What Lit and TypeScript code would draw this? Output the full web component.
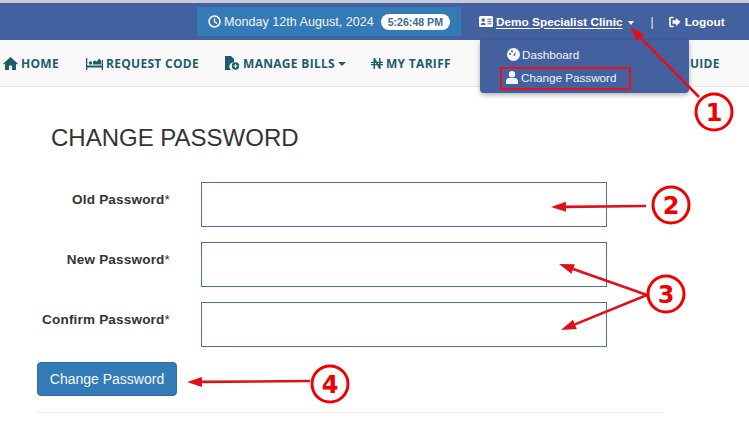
import { LitElement, html, css, svg } from "lit";
import { customElement } from "lit/decorators.js";

const arrow = (x1: number, y1: number, x2: number, y2: number, c = "#e0101a") => {
  const a = Math.atan2(y2 - y1, x2 - x1);
  const l = 15, w = 5;
  const bx = x2 - Math.cos(a) * l, by = y2 - Math.sin(a) * l;
  const nx = -Math.sin(a) * w, ny = Math.cos(a) * w;
  return svg`<line x1=${x1} y1=${y1} x2=${bx} y2=${by} stroke=${c} stroke-width="2.6"></line>
  <polygon fill=${c} points="${x2},${y2} ${bx + nx},${by + ny} ${bx - nx},${by - ny}"></polygon>`;
};
const badge = (cx: number, cy: number, t: string) => svg`
  <circle cx=${cx} cy=${cy} r="18" fill="#fff" stroke="#f00000" stroke-width="3"></circle>
  <text x=${cx} y=${cy + 8.5} text-anchor="middle" class="num">${t}</text>`;

@customElement("app-root")
export class AppRoot extends LitElement {
  static styles = css`
    :host { display: block; position: relative; width: 749px; height: 424px; overflow: hidden; background: #fff;
      font-family: "Liberation Sans", Arial, sans-serif; color: #333; font-size: 14px; }
    .strip { height: 3px; background: #c9ccd6; }
    .top { height: 37px; background: #43619f; display: flex; align-items: center; color: #fff; box-sizing: border-box; padding: 0 0 0 197px; }
    .clock { width: 264px; height: 29px; background: #337ab7; display: flex; align-items: center; box-sizing: border-box; padding-left: 11px; gap: 3px; font-size: 12.6px; color: #f2f6fb; white-space: nowrap; flex: none; }
    .pill { margin-left: 4px; width: 69px; height: 16px; line-height: 16px; background: #fff; color: #3a6c96; border-radius: 8px; text-align: center; font-size: 10.6px; font-weight: bold; }
    .user { margin-left: 18px; display: flex; align-items: center; gap: 3px; font-weight: bold; font-size: 11.8px; white-space: nowrap; }
    .user u { text-underline-offset: 2px; }
    .caret { display: inline-block; border-top: 4px solid #fff; border-left: 3.5px solid transparent; border-right: 3.5px solid transparent; margin-left: 2px; margin-top: 3px; }
    .sep { margin-left: 17px; font-size: 12px; color: #e6ebf5; }
    .logout { margin-left: 15px; display: flex; align-items: center; gap: 4px; font-weight: bold; font-size: 11.8px; }
    nav { height: 47px; background: #f8f8f8; border-bottom: 1px solid #e7e7e7; box-sizing: border-box; display: flex; align-items: center; padding-left: 3px; font-family: "Open Sans", sans-serif; font-weight: 700; font-size: 12px; letter-spacing: .3px; color: #1f5c6b; white-space: nowrap; }
    .it { display: flex; align-items: center; gap: 3px; flex: none; }
    .it.req { margin-left: 27px; }
    .it.bills { margin-left: 26px; }
    .it.tariff { margin-left: 25px; }
    .it.guide { margin-left: 230px; }
    .ncaret { display: inline-block; border-top: 4px solid #1f5c6b; border-left: 4px solid transparent; border-right: 4px solid transparent; margin-top: 2px; }
    .menu { position: absolute; left: 480px; top: 40px; width: 209px; height: 53px; background: #43619f; border-radius: 0 0 4px 4px; box-shadow: 0 2px 5px rgba(0,0,0,.3); color: #f2f5fa; font-size: 11.7px; box-sizing: border-box; padding: 5px 0 0 20px; }
    .mi { display: flex; align-items: center; gap: 2px; height: 18px; padding-left: 7px; }
    .mi.box { margin-top: 4px; width: 131px; height: 23px; box-sizing: border-box; border: 2px solid #e8101c; padding: 0 0 2px 4px; gap: 3px; }
    main { padding: 0 0 0 37px; width: 626px; }
    h2 { margin: 0; padding: 38px 0 0 14px; font-weight: 400; font-size: 24px; line-height: 26px; color: #333; }
    form { display: flex; flex-direction: column; gap: 15px; margin-top: 31px; }
    .row { display: flex; align-items: flex-start; }
    label { width: 133px; text-align: right; font-weight: bold; font-size: 13.5px; padding-top: 10px; letter-spacing: .2px; color: #333; line-height: 16px; }
    label span { font-weight: 400; }
    .input { margin-left: 31px; width: 406px; height: 45px; box-sizing: border-box; border: 1px solid #4f6fa5; background: #fff; }
    .btn { width: 140px; height: 34px; box-sizing: border-box; background: #337ab7; border: 1px solid #2e6da4; border-radius: 4px; color: #f4f8fc; font: 14px "Liberation Sans", Arial, sans-serif; text-align: center; line-height: 32px; }
    hr { margin: 16px 0 0; border: 0; border-top: 1px solid #eee; }
    svg.over { position: absolute; inset: 0; width: 749px; height: 424px; pointer-events: none; }
    .num { font: 900 24px "DejaVu Sans", sans-serif; fill: #f00000; }
    svg { flex: none; display: block; }
  `;

  render() {
    return html`
      <div class="strip"></div>
      <div class="top">
        <div class="clock">
          <svg width="13" height="13" viewBox="0 0 14 14"><circle cx="7" cy="7" r="5.9" fill="none" stroke="#fff" stroke-width="1.6"></circle><path d="M7 3.5V7.3L9.7 9" fill="none" stroke="#fff" stroke-width="1.4"></path></svg>
          <span>Monday 12th August, 2024</span>
          <span class="pill">5:26:48 PM</span>
        </div>
        <div class="user">
          <svg width="14" height="11" viewBox="0 0 14 11"><rect width="14" height="11" rx="1.5" fill="#fff"></rect><circle cx="4.2" cy="4" r="1.7" fill="#43619f"></circle><path d="M1.7 9c0-3 5-3 5 0z" fill="#43619f"></path><path d="M8.5 3.2h4M8.5 5.5h4M8.5 7.8h4" stroke="#43619f"></path></svg>
          <span><u>Demo Specialist Clinic </u></span><i class="caret"></i>
        </div>
        <span class="sep">|</span>
        <div class="logout">
          <svg width="12" height="12" viewBox="0 0 13 12"><path d="M5 1.2H2.2Q1 1.2 1 2.4v7.2q0 1.2 1.2 1.2H5" fill="none" stroke="#fff" stroke-width="1.7"></path><path d="M7.5 1.8 12.6 6 7.5 10.2V7.8H3.8V4.2h3.7z" fill="#fff"></path></svg>
          <span>Logout</span>
        </div>
      </div>
      <nav>
        <div class="it">
          <svg width="15" height="13" viewBox="0 0 15 13"><path d="M7.5 0 15 6.7l-.8.9-1.2-1V13H9V8.5H6V13H2V6.6l-1.2 1L0 6.7z" fill="#1f5c6b"></path></svg>
          <span>HOME</span>
        </div>
        <div class="it req">
          <svg width="17" height="13" viewBox="0 0 17 13"><path d="M0 1h1.3v7.5h14.4V3H17v10h-1.3v-2.5H1.3V13H0z" fill="#1f5c6b"></path><circle cx="4.5" cy="6" r="1.7" fill="#1f5c6b"></circle><path d="M7 7.5V4.5l2-1 2 1 2-3 2 2v4z" fill="#1f5c6b"></path></svg>
          <span>REQUEST CODE</span>
        </div>
        <div class="it bills">
          <svg width="15" height="14" viewBox="0 0 15 14"><path d="M0 0h6l3 3v3.5A4 4 0 0 0 6.5 14H0z" fill="#1f5c6b"></path><circle cx="10.5" cy="10" r="3.7" fill="#1f5c6b"></circle><path d="M10.5 8v4M8.5 10h4" stroke="#fff"></path></svg>
          <span>MANAGE BILLS</span><i class="ncaret"></i>
        </div>
        <div class="it tariff">
          <svg width="12" height="11" viewBox="0 0 12 11"><path d="M2.5 11V0h1.400l4.200 7.500V0h1.500v11H8.200L4 3.500V11zM0 3.800h12v1.300H0zM0 6h12v1.300H0z" fill="#1f5c6b"></path></svg>
          <span>MY TARIFF</span>
        </div>
        <div class="it guide"><span>GUIDE</span></div>
      </nav>
      <main>
        <h2>CHANGE PASSWORD</h2>
        <form>
          <div class="row"><label>Old Password<span>*</span></label><div class="input"></div></div>
          <div class="row"><label>New Password<span>*</span></label><div class="input"></div></div>
          <div class="row"><label>Confirm Password<span>*</span></label><div class="input"></div></div>
          <div class="btn">Change Password</div>
        </form>
        <hr />
      </main>
      <div class="menu">
        <div class="mi">
          <svg width="13" height="13" viewBox="0 0 13 13"><circle cx="6.5" cy="6.5" r="6.5" fill="#f2f5fa"></circle><path d="M6.2 7.200 9 3.500l-1.300 4.700z" fill="#43619f"></path><circle cx="3" cy="6" r="1" fill="#43619f"></circle><circle cx="5" cy="3.200" r="1" fill="#43619f"></circle></svg>
          <span>Dashboard</span>
        </div>
        <div class="mi box">
          <svg width="12" height="13" viewBox="0 0 12 13"><circle cx="6" cy="3.300" r="3.200" fill="#f2f5fa"></circle><path d="M0 13V10.500Q0 7 3.500 7h5Q12 7 12 10.500V13z" fill="#f2f5fa"></path></svg>
          <span>Change Password</span>
        </div>
      </div>
      <svg class="over" viewBox="0 0 749 424">
        ${arrow(699, 97, 630, 27)}
        ${arrow(646, 206, 551, 207)}
        ${arrow(647, 295, 559, 264)}
        ${arrow(647, 295, 561, 330)}
        ${arrow(310, 381, 187, 382)}
        ${badge(714, 112, "1")}
        ${badge(671, 205, "2")}
        ${badge(666, 294, "3")}
        ${badge(330, 384, "4")}
      </svg>
    `;
  }
}
